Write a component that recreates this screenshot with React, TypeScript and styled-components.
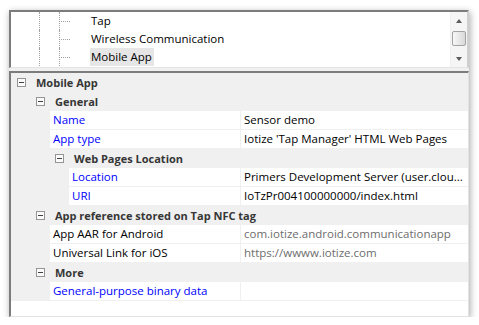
import React from "react";
import styled, { createGlobalStyle } from "styled-components";

const GlobalStyle = createGlobalStyle`
  html, body { margin: 0; padding: 0; background: #ffffff; }
  body {
    font-family: "Open Sans", "Noto Sans", sans-serif;
    font-size: 11.5px;
    color: #000;
  }
`;

const Page = styled.div`
  padding: 10px 0 0 9px;
`;

const Frame = styled.div`
  width: 460px;
  height: 307px;
  display: flex;
  flex-direction: column;
  background: #f0f0f0;
  box-shadow: 1px 2px 7px rgba(0, 0, 0, 0.35);
`;

/* ---------- tree ---------- */

const TreePane = styled.div`
  box-sizing: border-box;
  height: 58px;
  display: flex;
  background: #ffffff;
  border-top: 2px solid #7c7c7c;
  border-left: 2px solid #7c7c7c;
  border-right: 2px solid #cfcfcf;
  border-bottom: 1px solid #e4e4e4;
  overflow: hidden;
`;

const TreeBody = styled.div`
  flex: 1;
  display: flex;
  flex-direction: column;
`;

const TreeRow = styled.div`
  height: 18px;
  display: flex;
  align-items: stretch;
`;

const TreeSpacer = styled.div`
  width: 28px;
`;

const Guide = styled.div<{ $w: number }>`
  width: ${(p) => p.$w}px;
  border-left: 1px dotted #a0a0a0;
  display: flex;
  align-items: center;
`;

const Connector = styled.div`
  margin-left: 1px;
  margin-top: 1px;
  width: 9px;
  border-top: 1px dotted #a0a0a0;
`;

const TreeLabel = styled.div<{ $selected?: boolean }>`
  height: 18px;
  line-height: 18px;
  padding: 0 2px 0 1px;
  white-space: nowrap;
  background: ${(p) => (p.$selected ? "#e6e6e6" : "transparent")};
`;

const ScrollBar = styled.div`
  width: 16px;
  display: flex;
  flex-direction: column;
  background: #f5f5f5;
  border-left: 1px solid #f0f0f0;
`;

const ScrollButton = styled.div`
  height: 17px;
  display: flex;
  align-items: center;
  justify-content: center;
`;

const Arrow = styled.div<{ $dir: "up" | "down" }>`
  width: 0;
  height: 0;
  border-left: 3.5px solid transparent;
  border-right: 3.5px solid transparent;
  ${(p) =>
    p.$dir === "up"
      ? "border-bottom: 4px solid #5a5a5a;"
      : "border-top: 4px solid #5a5a5a;"}
`;

const Track = styled.div`
  flex: 1;
  display: flex;
  flex-direction: column;
`;

const Thumb = styled.div`
  box-sizing: border-box;
  margin: 2px 1px 0 1px;
  height: 15px;
  border: 1px solid #a2a2a2;
  border-radius: 2px;
  background: linear-gradient(to right, #f7f7f7, #d9d9d9);
`;

const Splitter = styled.div`
  height: 3px;
  background: #f0f0f0;
`;

/* ---------- property grid ---------- */

const GridPane = styled.div`
  box-sizing: border-box;
  flex: 1;
  display: flex;
  flex-direction: column;
  background: #ffffff;
  border-top: 2px solid #7c7c7c;
  border-left: 2px solid #7c7c7c;
  border-right: 1px solid #e2e2e2;
  border-bottom: 1px solid #e2e2e2;
  overflow: hidden;
`;

const CategoryRow = styled.div<{ $depth: number }>`
  height: 19px;
  display: flex;
  align-items: center;
  padding-left: ${(p) => 6 + p.$depth * 19}px;
  background: #f0f0f0;
  white-space: nowrap;
`;

const Expander = styled.div`
  box-sizing: border-box;
  width: 9px;
  height: 9px;
  border: 1px solid #959595;
  background: #fbfbfb;
  display: flex;
  align-items: center;
  justify-content: center;
  &::after {
    content: "";
    width: 5px;
    height: 1px;
    background: #404040;
  }
`;

const CategoryLabel = styled.span`
  margin-left: 10px;
  font-size: 11px;
  font-weight: 700;
  color: #363636;
`;

const PropRow = styled.div`
  height: 19px;
  display: flex;
  background: #f0f0f0;
`;

const NameCell = styled.div<{ $indent: number; $tone: "link" | "plain" }>`
  box-sizing: border-box;
  margin-left: ${(p) => p.$indent}px;
  width: ${(p) => 229 - p.$indent}px;
  height: 18px;
  line-height: 18px;
  padding-left: 3px;
  background: #ffffff;
  color: ${(p) => (p.$tone === "link" ? "#0000ff" : "#000000")};
  white-space: nowrap;
  overflow: hidden;
`;

const ValueCell = styled.div<{ $tone: "normal" | "muted" }>`
  box-sizing: border-box;
  flex: 1;
  min-width: 0;
  margin-left: 1px;
  height: 18px;
  line-height: 18px;
  padding-left: 3px;
  background: #ffffff;
  color: ${(p) => (p.$tone === "muted" ? "#6d6d6d" : "#000000")};
  white-space: nowrap;
  overflow: hidden;
  text-overflow: ellipsis;
`;

type Item =
  | { kind: "cat"; depth: number; label: string }
  | {
      kind: "prop";
      depth: number;
      name: string;
      value: string;
      nameTone: "link" | "plain";
      valueTone: "normal" | "muted";
    };

const items: Item[] = [
  { kind: "cat", depth: 0, label: "Mobile App" },
  { kind: "cat", depth: 1, label: "General" },
  { kind: "prop", depth: 2, name: "Name", value: "Sensor demo", nameTone: "link", valueTone: "normal" },
  { kind: "prop", depth: 2, name: "App type", value: "Iotize 'Tap Manager' HTML Web Pages", nameTone: "link", valueTone: "normal" },
  { kind: "cat", depth: 2, label: "Web Pages Location" },
  { kind: "prop", depth: 3, name: "Location", value: "Primers Development Server (user.clou...", nameTone: "link", valueTone: "normal" },
  { kind: "prop", depth: 3, name: "URI", value: "IoTzPr004100000000/index.html", nameTone: "link", valueTone: "normal" },
  { kind: "cat", depth: 1, label: "App reference stored on Tap NFC tag" },
  { kind: "prop", depth: 2, name: "App AAR for Android", value: "com.iotize.android.communicationapp", nameTone: "plain", valueTone: "muted" },
  { kind: "prop", depth: 2, name: "Universal Link for iOS", value: "https://wwww.iotize.com", nameTone: "plain", valueTone: "muted" },
  { kind: "cat", depth: 1, label: "More" },
  { kind: "prop", depth: 2, name: "General-purpose binary data", value: "", nameTone: "link", valueTone: "normal" },
];

const treeItems = [
  { label: "Tap", selected: false },
  { label: "Wireless Communication", selected: false },
  { label: "Mobile App", selected: true },
];

export default function App() {
  return (
    <>
      <GlobalStyle />
      <Page>
        <Frame>
          <TreePane>
            <TreeBody>
              {treeItems.map((t) => (
                <TreeRow key={t.label}>
                  <TreeSpacer />
                  <Guide $w={19} />
                  <Guide $w={30}>
                    <Connector />
                  </Guide>
                  <TreeLabel $selected={t.selected}>{t.label}</TreeLabel>
                </TreeRow>
              ))}
            </TreeBody>
            <ScrollBar>
              <ScrollButton>
                <Arrow $dir="up" />
              </ScrollButton>
              <Track>
                <Thumb />
              </Track>
              <ScrollButton>
                <Arrow $dir="down" />
              </ScrollButton>
            </ScrollBar>
          </TreePane>
          <Splitter />
          <GridPane>
            {items.map((it, i) =>
              it.kind === "cat" ? (
                <CategoryRow key={i} $depth={it.depth}>
                  <Expander />
                  <CategoryLabel>{it.label}</CategoryLabel>
                </CategoryRow>
              ) : (
                <PropRow key={i}>
                  <NameCell $indent={it.depth * 19 + 1} $tone={it.nameTone}>
                    {it.name}
                  </NameCell>
                  <ValueCell $tone={it.valueTone}>{it.value}</ValueCell>
                </PropRow>
              )
            )}
          </GridPane>
        </Frame>
      </Page>
    </>
  );
}
